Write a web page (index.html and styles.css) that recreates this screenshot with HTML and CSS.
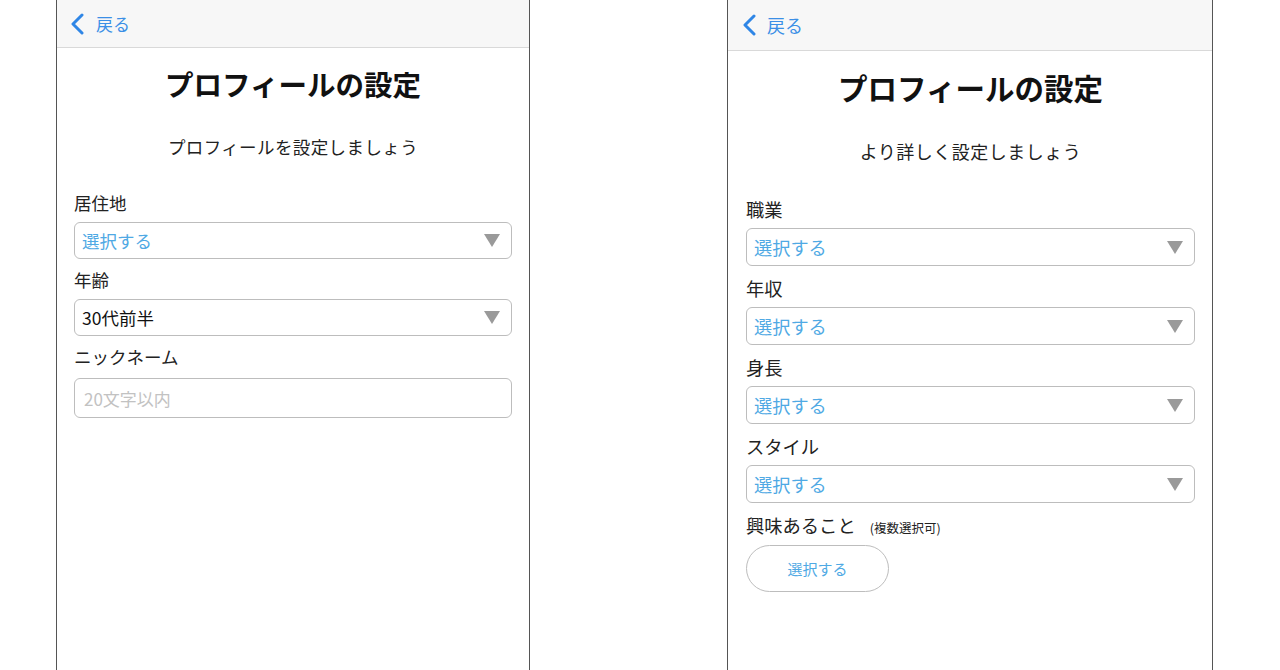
FILE: index.html
```html
<!DOCTYPE html>
<html lang="ja">
<head>
<meta charset="utf-8">
<title>プロフィールの設定</title>
<link rel="stylesheet" href="styles.css">
</head>
<body>
<div class="stage">
  <section class="phone phone-a">
    <header class="nav">
      <svg class="chev" viewBox="0 0 14 22" width="14" height="22"><polyline points="12,2 3,11 12,20" fill="none" stroke="#2f86e6" stroke-width="3" stroke-linecap="round" stroke-linejoin="round"/></svg>
      <span class="back">戻る</span>
    </header>
    <div class="content">
      <h1 class="title">プロフィールの設定</h1>
      <p class="sub">プロフィールを設定しましょう</p>
      <div class="field">
        <div class="label">居住地</div>
        <div class="select"><span class="ph">選択する</span><span class="tri"></span></div>
      </div>
      <div class="field">
        <div class="label">年齢</div>
        <div class="select"><span class="val">30代前半</span><span class="tri"></span></div>
      </div>
      <div class="field">
        <div class="label">ニックネーム</div>
        <div class="input"><span class="placeholder">20文字以内</span></div>
      </div>
    </div>
  </section>

  <section class="phone phone-b">
    <header class="nav">
      <svg class="chev" viewBox="0 0 14 22" width="14" height="22"><polyline points="12,2 3,11 12,20" fill="none" stroke="#2f86e6" stroke-width="3" stroke-linecap="round" stroke-linejoin="round"/></svg>
      <span class="back">戻る</span>
    </header>
    <div class="content">
      <h1 class="title">プロフィールの設定</h1>
      <p class="sub">より詳しく設定しましょう</p>
      <div class="field">
        <div class="label">職業</div>
        <div class="select"><span class="ph">選択する</span><span class="tri"></span></div>
      </div>
      <div class="field">
        <div class="label">年収</div>
        <div class="select"><span class="ph">選択する</span><span class="tri"></span></div>
      </div>
      <div class="field">
        <div class="label">身長</div>
        <div class="select"><span class="ph">選択する</span><span class="tri"></span></div>
      </div>
      <div class="field">
        <div class="label">スタイル</div>
        <div class="select"><span class="ph">選択する</span><span class="tri"></span></div>
      </div>
      <div class="field">
        <div class="label">興味あること<span class="note">(複数選択可)</span></div>
        <button class="pill">選択する</button>
      </div>
    </div>
  </section>
</div>
</body>
</html>
```

FILE: styles.css
```css
* { box-sizing: border-box; }
html, body {
  margin: 0;
  padding: 0;
  background: #ffffff;
  overflow: hidden;
  height: 670px;
}
body {
  font-family: "Noto Sans CJK JP", "Noto Sans", sans-serif;
  color: #1a1a1a;
}
.stage {
  display: flex;
  align-items: flex-start;
  padding-left: 56px;
  gap: 197px;
}
.phone {
  border-left: 1px solid #555;
  border-right: 1px solid #555;
  height: 670px;
  background: #fff;
}
.phone-a { width: 474px; }
.phone-b { width: 486px; }

.nav {
  display: flex;
  align-items: center;
  background: #f7f7f7;
  border-bottom: 1px solid #d9d9d9;
}
.phone-a .nav { height: 48px; padding-left: 13px; gap: 12px; }
.phone-b .nav { height: 51px; padding-left: 14px; gap: 11px; }
.chev { display: block; }
.back {
  color: #3b8fe6;
  line-height: 1;
}
.phone-a .back { font-size: 17px; }
.phone-b .back { font-size: 18px; }

.content { display: flex; flex-direction: column; }
.phone-a .content { padding: 0 17px; }
.phone-b .content { padding: 0 17px 0 18px; }

.title {
  margin: 0;
  text-align: center;
  font-weight: 700;
  line-height: 36px;
  color: #111;
}
.phone-a .title { font-size: 28.5px; margin-top: 18px; }
.phone-b .title { font-size: 29.5px; margin-top: 18px; }

.sub {
  margin: 0;
  text-align: center;
  line-height: 24px;
  color: #222;
}
.phone-a .sub { font-size: 17.5px; margin-top: 33px; margin-bottom: 32px; letter-spacing: 0.4px; }
.phone-b .sub { font-size: 18px; margin-top: 34px; margin-bottom: 34px; letter-spacing: 0.5px; }

.field { display: flex; flex-direction: column; }
.label {
  height: 24px;
  line-height: 24px;
  color: #222;
  display: flex;
  align-items: baseline;
}
.phone-a .label { font-size: 17.5px; }
.phone-b .label { font-size: 18.3px; }
.note {
  font-size: 12.5px;
  line-height: 1;
  margin-left: 14px;
  color: #222;
}

.select, .input {
  display: flex;
  align-items: center;
  justify-content: space-between;
  border: 1px solid #bdbdbd;
  border-radius: 6px;
  background: #fff;
}
.phone-a .select { height: 37px; margin-top: 7px; margin-bottom: 9px; padding: 0 11px 0 7px; }
.phone-b .select { height: 38px; margin-top: 7px; margin-bottom: 10px; padding: 0 11px 0 7px; }
.phone-a .input { height: 40px; margin-top: 9px; padding: 0 9px; }

.ph { color: #4fa9e4; }
.val { color: #111; }
.placeholder { color: #c2c2c2; }
.phone-a .ph, .phone-a .val { font-size: 17.5px; }
.phone-b .ph { font-size: 18.2px; }
.phone-a .placeholder { font-size: 17px; }

.tri {
  width: 0;
  height: 0;
  border-left: 8px solid transparent;
  border-right: 8px solid transparent;
  border-top: 13px solid #9a9a9a;
}

.pill {
  margin-top: 8px;
  width: 143px;
  height: 47px;
  border: 1px solid #bdbdbd;
  border-radius: 24px;
  background: #fff;
  color: #4fa9e4;
  font-family: "Noto Sans CJK JP", "Noto Sans", sans-serif;
  font-size: 15px;
  padding: 0;
  cursor: pointer;
}
```
